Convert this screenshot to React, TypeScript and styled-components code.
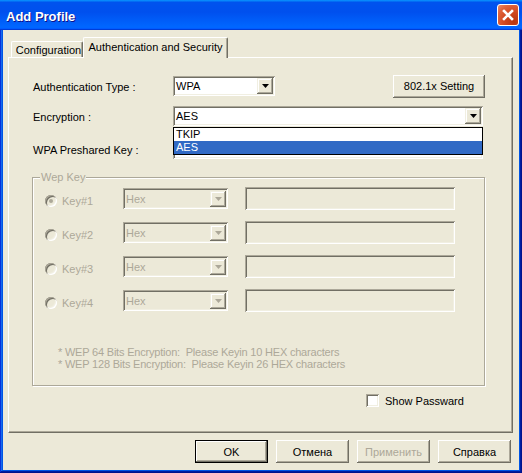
import React from 'react'
import styled, { createGlobalStyle } from 'styled-components'

const face = '#ECE9D8'
const shadow = '#ACA899'
const darkShadow = '#716F64'
const light = '#F1EFE2'
const grayText = '#ACA899'

const GlobalStyle = createGlobalStyle`
    html, body {
        margin: 0;
        padding: 0;
        background: #fff;
    }
    body {
        font-family: 'Liberation Sans', Arial, sans-serif;
        font-size: 11px;
        color: #000;
    }
`

const Window = styled.div`
    width: 522px;
    height: 473px;
    display: flex;
    flex-direction: column;
    overflow: hidden;
`

const TitleBar = styled.div`
    flex: none;
    height: 30px;
    box-sizing: border-box;
    display: flex;
    align-items: center;
    justify-content: space-between;
    padding: 0 3px 0 6px;
    background: linear-gradient(
        180deg,
        #0997ff,
        #0053ee 8%,
        #0050ee 40%,
        #0066ff 88%,
        #0066ff 93%,
        #005bff 95%,
        #003dd7 96%,
        #003dd7
    );
`

const Title = styled.span`
    color: #fff;
    font-family: 'Liberation Sans', Arial, sans-serif;
    font-weight: 700;
    font-size: 13px;
    text-shadow: 1px 1px #0f1089;
    padding-top: 3px;
`

const CloseButton = styled.div`
    width: 22px;
    height: 22px;
    box-sizing: border-box;
    border: 1px solid #fff;
    border-radius: 3px;
    display: flex;
    align-items: center;
    justify-content: center;
    background: radial-gradient(circle at 80% 85%, #b8350e 0%, #d24a22 45%, #e0643c 75%, #eb8d6c 100%);
`

const Frame = styled.div`
    flex: 1;
    display: flex;
    padding: 0 3px 3px;
    background: #0055e5;
    box-shadow: inset -1px -1px #00138c, inset 1px 0 #0831d9, inset -2px -2px #001ea0, inset 2px 0 #166aee;
`

const Client = styled.div`
    flex: 1;
    display: flex;
    flex-direction: column;
    background: ${face};
    padding: 7px 6px 0 5px;
`

const TabStrip = styled.div`
    display: flex;
    align-items: flex-end;
    height: 20px;
    padding-left: 3px;
`

const Tab = styled.div<{ $active?: boolean }>`
    position: relative;
    z-index: ${(p) => (p.$active ? 1 : 0)};
    box-sizing: border-box;
    height: ${(p) => (p.$active ? '21px' : '16px')};
    margin-bottom: ${(p) => (p.$active ? '-1px' : '0')};
    width: ${(p) => (p.$active ? '145px' : '72px')};
    display: flex;
    align-items: center;
    justify-content: center;
    padding-bottom: ${(p) => (p.$active ? '2px' : '0')};
    padding-left: ${(p) => (p.$active ? '0' : '3px')};
    background: ${face};
    border-top: 1px solid #fff;
    border-left: 1px solid #fff;
    border-right: 1px solid ${darkShadow};
    border-radius: 2px 2px 0 0;
    box-shadow: inset -1px 0 ${shadow};
    white-space: nowrap;
`

const Panel = styled.div`
    position: relative;
    height: 376px;
    box-sizing: border-box;
    padding: 17px 27px 0 24px;
    border-top: 1px solid #fff;
    border-left: 1px solid #fff;
    border-right: 1px solid ${darkShadow};
    border-bottom: 1px solid ${darkShadow};
    box-shadow: inset -1px -1px ${shadow};
    display: flex;
    flex-direction: column;
`

const FormRow = styled.div<{ $gap: number; $height: number }>`
    display: flex;
    align-items: center;
    margin-top: ${(p) => p.$gap}px;
    height: ${(p) => p.$height}px;
`

const FieldLabel = styled.div`
    width: 140px;
    flex: none;
    padding-top: 2px;
`

const ComboWrap = styled.div`
    position: relative;
`

const ComboBox = styled.div<{ $width: number; $disabled?: boolean }>`
    width: ${(p) => p.$width}px;
    height: ${(p) => (p.$disabled ? 21 : 20)}px;
    box-sizing: border-box;
    display: flex;
    align-items: center;
    justify-content: space-between;
    padding: 2px 2px 2px 3px;
    background: ${(p) => (p.$disabled ? face : '#fff')};
    color: ${(p) => (p.$disabled ? grayText : '#000')};
    box-shadow: inset 1px 1px ${shadow}, inset -1px -1px #fff, inset 2px 2px ${darkShadow}, inset -2px -2px ${light};
`

const DropButton = styled.div`
    width: 16px;
    height: 16px;
    box-sizing: border-box;
    display: flex;
    align-items: center;
    justify-content: center;
    background: ${face};
    box-shadow: inset -1px -1px ${darkShadow}, inset 1px 1px ${light}, inset -2px -2px ${shadow}, inset 2px 2px #fff;
`

const DropList = styled.div`
    position: absolute;
    left: 0;
    top: 21px;
    z-index: 2;
    width: 310px;
    box-sizing: border-box;
    border: 1px solid #000;
    background: #fff;
`

const DropItem = styled.div<{ $selected?: boolean }>`
    height: 13px;
    line-height: 13px;
    padding-left: 2px;
    background: ${(p) => (p.$selected ? '#316AC5' : '#fff')};
    color: ${(p) => (p.$selected ? '#fff' : '#000')};
`

const PushButton = styled.div<{ $width: number; $default?: boolean; $disabled?: boolean }>`
    width: ${(p) => p.$width}px;
    height: 23px;
    box-sizing: border-box;
    display: flex;
    align-items: center;
    justify-content: center;
    background: ${face};
    color: ${(p) => (p.$disabled ? grayText : '#000')};
    box-shadow: ${(p) =>
        p.$default
            ? `inset 0 0 0 1px #000, inset -2px -2px ${darkShadow}, inset 2px 2px #fff, inset -3px -3px ${shadow}`
            : `inset -1px -1px ${darkShadow}, inset 1px 1px #fff, inset -2px -2px ${shadow}`};
`

const TextBox = styled.div<{ $width: number; $height: number; $bg?: string }>`
    width: ${(p) => p.$width}px;
    height: ${(p) => p.$height}px;
    box-sizing: border-box;
    background: ${(p) => p.$bg || face};
    box-shadow: inset 1px 1px ${shadow}, inset -1px -1px #fff, inset 2px 2px ${darkShadow}, inset -2px -2px ${light};
`

const GroupBox = styled.div`
    position: relative;
    margin: 18px 0 0 -1px;
    width: 453px;
    height: 209px;
    box-sizing: border-box;
    border: 1px solid ${shadow};
    box-shadow: inset 1px 1px #fff, 1px 1px #fff;
    padding: 9px 0 0 12px;
    display: flex;
    flex-direction: column;
    gap: 11px;
`

const GroupLegend = styled.div`
    position: absolute;
    top: -7px;
    left: 7px;
    padding: 0 1px;
    background: ${face};
    color: ${grayText};
`

const KeyRow = styled.div`
    display: flex;
    align-items: center;
    height: 23px;
`

const Radio = styled.div`
    width: 12px;
    height: 12px;
    flex: none;
    margin-top: 5px;
    border-radius: 50%;
    display: flex;
    align-items: center;
    justify-content: center;
    background: ${face};
    box-shadow: inset 1px 1px ${shadow}, inset -1px -1px #fff, inset 2px 2px ${darkShadow}, inset -2px -2px ${light};
`

const RadioDot = styled.div`
    width: 4px;
    height: 4px;
    border-radius: 50%;
    background: ${grayText};
`

const KeyLabel = styled.div`
    width: 61px;
    flex: none;
    margin-left: 5px;
    margin-top: 5px;
    color: ${grayText};
`

const KeyField = styled(TextBox)`
    margin-left: 17px;
`

const Notes = styled.div`
    margin: 23px 0 0 13px;
    color: ${grayText};
    line-height: 12px;
    letter-spacing: -0.2px;
    white-space: pre;
`

const CheckRow = styled.div`
    display: flex;
    align-items: center;
    margin: 8px 0 0 333px;
    gap: 6px;
`

const CheckBox = styled.div`
    width: 13px;
    height: 13px;
    box-sizing: border-box;
    background: #fff;
    box-shadow: inset 1px 1px ${shadow}, inset -1px -1px #fff, inset 2px 2px ${darkShadow}, inset -2px -2px ${light};
`

const Footer = styled.div`
    display: flex;
    justify-content: flex-end;
    gap: 8px;
    margin-top: 7px;
    padding-right: 2px;
`

const Arrow = ({ disabled }: { disabled?: boolean }) => (
    <svg width="7" height="4" viewBox="0 0 7 4">
        <path d="M0 0h7L3.5 4z" fill={disabled ? grayText : '#000'} />
    </svg>
)

const keys = ['Key#1', 'Key#2', 'Key#3', 'Key#4']

const App = () => {
    return (
        <Window>
            <GlobalStyle />
            <TitleBar>
                <Title>Add Profile</Title>
                <CloseButton>
                    <svg width="12" height="12" viewBox="0 0 12 12">
                        <path d="M2 2L10 10M10 2L2 10" stroke="#fff" strokeWidth="2.6" strokeLinecap="square" />
                    </svg>
                </CloseButton>
            </TitleBar>
            <Frame>
                <Client>
                    <TabStrip>
                        <Tab>Configuration</Tab>
                        <Tab $active>Authentication and Security</Tab>
                    </TabStrip>
                    <Panel>
                        <FormRow $gap={0} $height={22}>
                            <FieldLabel>Authentication Type :</FieldLabel>
                            <ComboBox $width={102}>
                                <span>WPA</span>
                                <DropButton>
                                    <Arrow />
                                </DropButton>
                            </ComboBox>
                            <div style={{ flex: 1 }} />
                            <PushButton $width={92}>802.1x Setting</PushButton>
                        </FormRow>
                        <FormRow $gap={9} $height={20}>
                            <FieldLabel>Encryption :</FieldLabel>
                            <ComboWrap>
                                <ComboBox $width={310}>
                                    <span>AES</span>
                                    <DropButton>
                                        <Arrow />
                                    </DropButton>
                                </ComboBox>
                                <DropList>
                                    <DropItem>TKIP</DropItem>
                                    <DropItem $selected>AES</DropItem>
                                </DropList>
                            </ComboWrap>
                        </FormRow>
                        <FormRow $gap={13} $height={20}>
                            <FieldLabel>WPA Preshared Key :</FieldLabel>
                            <TextBox $width={310} $height={20} $bg="#fff" />
                        </FormRow>
                        <GroupBox>
                            <GroupLegend>Wep Key</GroupLegend>
                            {keys.map((k, i) => (
                                <KeyRow key={k}>
                                    <Radio>{i === 0 && <RadioDot />}</Radio>
                                    <KeyLabel>{k}</KeyLabel>
                                    <ComboBox $width={105} $disabled>
                                        <span>Hex</span>
                                        <DropButton>
                                            <Arrow disabled />
                                        </DropButton>
                                    </ComboBox>
                                    <KeyField $width={210} $height={23} />
                                </KeyRow>
                            ))}
                            <Notes>
                                {'* WEP 64 Bits Encryption:  Please Keyin 10 HEX characters\n'}
                                {'* WEP 128 Bits Encryption:  Please Keyin 26 HEX characters'}
                            </Notes>
                        </GroupBox>
                        <CheckRow>
                            <CheckBox />
                            <span>Show Passward</span>
                        </CheckRow>
                    </Panel>
                    <Footer>
                        <PushButton $width={73} $default>
                            OK
                        </PushButton>
                        <PushButton $width={73}>Отмена</PushButton>
                        <PushButton $width={73} $disabled>
                            Применить
                        </PushButton>
                        <PushButton $width={73}>Справка</PushButton>
                    </Footer>
                </Client>
            </Frame>
        </Window>
    )
}

export default App
